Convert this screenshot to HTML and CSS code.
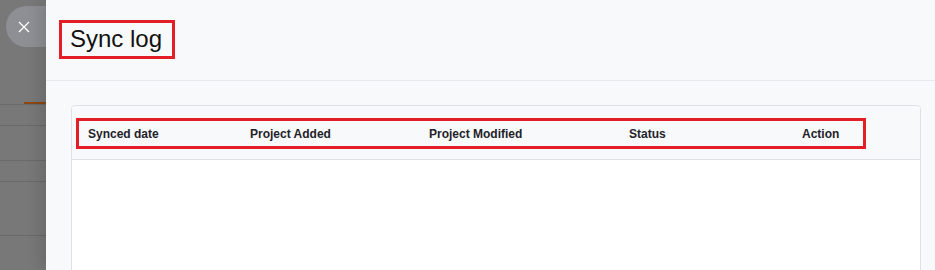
FILE: index.html
```html
<!DOCTYPE html>
<html lang="en">
<head>
    <meta charset="UTF-8">
    <title>Sync log</title>
    <link rel="stylesheet" href="styles.css">
</head>
<body>

    <div class="backdrop">
        <div class="bg-row bg-row-tab"><span class="tab-line"></span></div>
        <div class="bg-row" style="height: 20px"></div>
        <div class="bg-row" style="height: 34px"></div>
        <div class="bg-row" style="height: 20px"></div>
        <div class="bg-row" style="height: 53px"></div>
        <div class="close-btn">
            <svg width="12" height="12" viewBox="0 0 12 12">
                <path d="M1 1 L11 11 M11 1 L1 11" stroke="#fff" stroke-width="1.4" fill="none"/>
            </svg>
        </div>
    </div>

    <div class="drawer">
        <div class="drawer-header">
            <h1 class="title">Sync log</h1>
        </div>

        <div class="card">
            <div class="card-head">
                <div class="head-row">
                    <div>Synced date</div>
                    <div>Project Added</div>
                    <div>Project Modified</div>
                    <div>Status</div>
                    <div>Action</div>
                </div>
            </div>
            <div class="card-body"></div>
        </div>
    </div>

</body>
</html>
```

FILE: styles.css
```css
body {
    margin: 0;
    height: 270px;
    display: flex;
    overflow: hidden;
    font-family: "Liberation Sans", Arial, sans-serif;
    background-color: #787878;
}

.backdrop {
    position: relative;
    width: 46px;
    flex-shrink: 0;
}

.bg-row {
    position: relative;
    border-bottom: 1px solid #6a6a6a;
}

.bg-row-tab {
    height: 104px;
}

.tab-line {
    position: absolute;
    left: 24px;
    right: 0;
    bottom: 0;
    height: 2px;
    background-color: #8a4712;
}

.close-btn {
    position: absolute;
    top: 6px;
    left: 6px;
    width: 60px;
    height: 41px;
    border-radius: 21px;
    background-color: #8d8f94;
    box-sizing: border-box;
    padding-left: 12px;
    display: flex;
    align-items: center;
}

.drawer {
    position: relative;
    z-index: 1;
    flex: 1;
    height: 270px;
    overflow: hidden;
    background-color: #f8f9fb;
    box-shadow: -6px 0 14px rgba(0, 0, 0, 0.12);
}

.drawer-header {
    height: 60px;
    padding: 20px 0 0 13px;
    border-bottom: 1px solid #e6e8eb;
}

.title {
    display: inline-block;
    margin: 0;
    padding: 3px 10px 4px 8px;
    border: 3px solid #e41e26;
    font-size: 24px;
    font-weight: normal;
    line-height: 26px;
    color: #111;
}

.card {
    margin: 24px 14px 0 25px;
    border: 1px solid #dfe1e5;
    border-radius: 4px;
    background-color: #fff;
    overflow: hidden;
}

.card-head {
    padding: 12px 4px 10px 4px;
    background-color: #f8f9fb;
    border-bottom: 1px solid #dfe1e5;
}

.head-row {
    width: 790px;
    box-sizing: border-box;
    border: 3px solid #e41e26;
    height: 31px;
    padding-left: 9px;
    display: grid;
    grid-template-columns: 162px 179px 200px 173px 1fr;
    align-items: center;
    font-size: 12px;
    font-weight: bold;
    color: #1f2329;
}

.card-body {
    height: 200px;
}
```
